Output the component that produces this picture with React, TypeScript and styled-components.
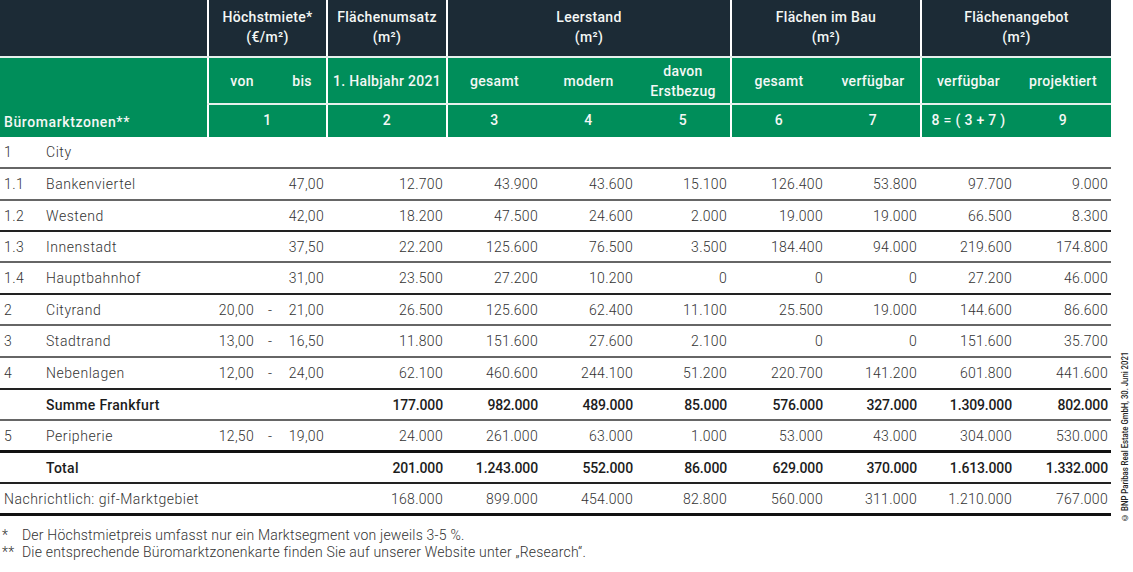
import React from 'react';
import styled, { createGlobalStyle } from 'styled-components';

const GlobalStyle = createGlobalStyle`
  html, body {
    margin: 0;
    padding: 0;
    background: #fff;
  }
`;

const Page = styled.div`
  display: flex;
  width: 1133px;
  height: 572px;
  overflow: hidden;
  font-family: Roboto, "Liberation Sans", sans-serif;
  color: #333;
`;

const Main = styled.div`
  width: 1111px;
  flex: none;
`;

const Table = styled.table`
  width: 1111px;
  table-layout: fixed;
  border-collapse: separate;
  border-spacing: 0;
  font-size: 14px;
  letter-spacing: 0.3px;
`;

const HeadCell = styled.th<{ $tone: 'dark' | 'green'; $height?: number; $first?: boolean; $shift?: number }>`
  height: ${({ $height }) => $height ?? 45}px;
  box-sizing: border-box;
  padding: 0 0 0 ${({ $shift }) => $shift ?? 0}px;
  background: ${({ $tone }) => ($tone === 'dark' ? '#1c2b36' : '#008e5a')};
  color: #f4f7f5;
  font-weight: 500;
  line-height: 20px;
  text-align: center;
  vertical-align: middle;
  border-left: ${({ $first }) => ($first ? '2px solid #fff' : '0')};
`;

const TitleCell = styled(HeadCell)`
  padding-bottom: 2px;
`;

const NumberCell = styled(HeadCell)`
  padding-bottom: 2px;
`;

const ZoneCell = styled(HeadCell)`
  padding: 0 0 5px 4px;
  text-align: left;
  vertical-align: bottom;
  letter-spacing: 0.6px;
`;

const DividerLine = styled.td<{ $color: string }>`
  height: 2px;
  padding: 0;
  background: ${({ $color }) => $color};
  font-size: 0;
  line-height: 0;
`;

const Row = styled.tr<{ $height: number }>`
  height: ${({ $height }) => $height}px;
`;

const RULES = {
  light: '2px solid #666',
  dark: '2px solid #222',
  thick: '3px solid #111',
};

type Rule = keyof typeof RULES;

const Cell = styled.td<{ $rule: Rule; $strong?: boolean }>`
  box-sizing: border-box;
  padding: 0 3px 0 0;
  border-bottom: ${({ $rule }) => RULES[$rule]};
  font-weight: ${({ $strong }) => ($strong ? 500 : 300)};
  letter-spacing: ${({ $strong }) => ($strong ? '-0.15px' : '0.3px')};
  color: ${({ $strong }) => ($strong ? '#1c1c1c' : '#333')};
  text-align: right;
  white-space: nowrap;
`;

const CodeCell = styled(Cell)`
  padding-left: 4px;
  text-align: left;
  letter-spacing: 0.5px;
`;

const NameCell = styled(Cell)`
  text-align: left;
  letter-spacing: ${({ $strong }) => ($strong ? '0.3px' : '0.55px')};
`;

const FromCell = styled(Cell)`
  padding-right: 13px;
`;

const ToCell = styled(Cell)`
  padding-right: 2px;
`;

const RangeTo = styled.div`
  display: flex;
  justify-content: space-between;
  padding-left: 1px;
`;

const Notes = styled.div`
  margin-top: 11px;
  font-size: 14px;
  line-height: 17px;
  font-weight: 300;
  letter-spacing: 0.2px;
`;

const Note = styled.div`
  display: flex;
`;

const NoteMark = styled.span`
  width: 22px;
  padding-left: 2px;
  box-sizing: border-box;
  flex: none;
`;

const Credit = styled.div`
  margin: 338px 0 0 9px;
  align-self: flex-start;
  writing-mode: vertical-rl;
  transform: rotate(180deg) scaleY(0.86);
  font-size: 9px;
  line-height: 10px;
  white-space: nowrap;
  color: #222;
  font-weight: 500;
`;

interface DataRow {
  code: string;
  name: string;
  from?: string;
  to?: string;
  values: string[];
  rule: Rule;
  height: number;
  strong?: boolean;
}

const widths = [46, 161, 60, 60, 119, 95, 95, 94, 96, 94, 95, 96];

const rows: DataRow[] = [
  { code: '1', name: 'City', values: ['', '', '', '', '', '', '', ''], rule: 'light', height: 32 },
  { code: '1.1', name: 'Bankenviertel', to: '47,00', values: ['12.700', '43.900', '43.600', '15.100', '126.400', '53.800', '97.700', '9.000'], rule: 'light', height: 32 },
  { code: '1.2', name: 'Westend', to: '42,00', values: ['18.200', '47.500', '24.600', '2.000', '19.000', '19.000', '66.500', '8.300'], rule: 'dark', height: 31 },
  { code: '1.3', name: 'Innenstadt', to: '37,50', values: ['22.200', '125.600', '76.500', '3.500', '184.400', '94.000', '219.600', '174.800'], rule: 'light', height: 31 },
  { code: '1.4', name: 'Hauptbahnhof', to: '31,00', values: ['23.500', '27.200', '10.200', '0', '0', '0', '27.200', '46.000'], rule: 'dark', height: 32 },
  { code: '2', name: 'Cityrand', from: '20,00', to: '21,00', values: ['26.500', '125.600', '62.400', '11.100', '25.500', '19.000', '144.600', '86.600'], rule: 'light', height: 31 },
  { code: '3', name: 'Stadtrand', from: '13,00', to: '16,50', values: ['11.800', '151.600', '27.600', '2.100', '0', '0', '151.600', '35.700'], rule: 'light', height: 32 },
  { code: '4', name: 'Nebenlagen', from: '12,00', to: '24,00', values: ['62.100', '460.600', '244.100', '51.200', '220.700', '141.200', '601.800', '441.600'], rule: 'dark', height: 32 },
  { code: '', name: 'Summe Frankfurt', values: ['177.000', '982.000', '489.000', '85.000', '576.000', '327.000', '1.309.000', '802.000'], rule: 'light', height: 31, strong: true },
  { code: '5', name: 'Peripherie', from: '12,50', to: '19,00', values: ['24.000', '261.000', '63.000', '1.000', '53.000', '43.000', '304.000', '530.000'], rule: 'thick', height: 32 },
  { code: '', name: 'Total', values: ['201.000', '1.243.000', '552.000', '86.000', '629.000', '370.000', '1.613.000', '1.332.000'], rule: 'dark', height: 31, strong: true },
];

const memo = ['168.000', '899.000', '454.000', '82.800', '560.000', '311.000', '1.210.000', '767.000'];

const App: React.FC = () => {
  return (
    <Page>
      <GlobalStyle />
      <Main>
        <Table>
          <colgroup>
            <col style={{ width: widths[0] }} />
            <col style={{ width: widths[1] }} />
            <col style={{ width: widths[2] }} />
            <col style={{ width: widths[3] - 1 }} />
            <col style={{ width: widths[4] + 1 }} />
            {widths.slice(5).map((w, i) => (
              <col key={i} style={{ width: w }} />
            ))}
          </colgroup>
          <thead>
            <tr>
              <TitleCell $tone="dark" $height={56} colSpan={2} />
              <TitleCell $tone="dark" $height={56} $first colSpan={2}>Höchstmiete*<br />(€/m²)</TitleCell>
              <TitleCell $tone="dark" $height={56} $first>Flächenumsatz<br />(m²)</TitleCell>
              <TitleCell $tone="dark" $height={56} $first colSpan={3}>Leerstand<br />(m²)</TitleCell>
              <TitleCell $tone="dark" $height={56} $first colSpan={2}>Flächen im Bau<br />(m²)</TitleCell>
              <TitleCell $tone="dark" $height={56} $first colSpan={2}>Flächenangebot<br />(m²)</TitleCell>
            </tr>
          </thead>
          <tbody>
            <tr>
              <DividerLine $color="#e6f0ec" colSpan={12} />
            </tr>
            <tr>
              <ZoneCell $tone="green" colSpan={2} rowSpan={3}>Büromarktzonen**</ZoneCell>
              <HeadCell $tone="green" $first $shift={8}>von</HeadCell>
              <HeadCell $tone="green" $shift={11}>bis</HeadCell>
              <HeadCell $tone="green" $first>1. Halbjahr 2021</HeadCell>
              <HeadCell $tone="green" $first>gesamt</HeadCell>
              <HeadCell $tone="green">modern</HeadCell>
              <HeadCell $tone="green">davon<br />Erstbezug</HeadCell>
              <HeadCell $tone="green" $first>gesamt</HeadCell>
              <HeadCell $tone="green">verfügbar</HeadCell>
              <HeadCell $tone="green" $first>verfügbar</HeadCell>
              <HeadCell $tone="green">projektiert</HeadCell>
            </tr>
            <tr>
              <DividerLine $color="#e6f0ec" colSpan={10} />
            </tr>
            <tr>
              <NumberCell $tone="green" $height={32} $first colSpan={2}>1</NumberCell>
              <NumberCell $tone="green" $height={32} $first>2</NumberCell>
              <NumberCell $tone="green" $height={32} $first>3</NumberCell>
              <NumberCell $tone="green" $height={32}>4</NumberCell>
              <NumberCell $tone="green" $height={32}>5</NumberCell>
              <NumberCell $tone="green" $height={32} $first>6</NumberCell>
              <NumberCell $tone="green" $height={32}>7</NumberCell>
              <NumberCell $tone="green" $height={32} $first>8 = ( 3 + 7 )</NumberCell>
              <NumberCell $tone="green" $height={32}>9</NumberCell>
            </tr>
            {rows.map((r) => (
              <Row key={r.code + r.name} $height={r.height}>
                <CodeCell $rule={r.rule}>{r.code}</CodeCell>
                <NameCell $rule={r.rule} $strong={r.strong}>{r.name}</NameCell>
                <FromCell $rule={r.rule}>{r.from}</FromCell>
                <ToCell $rule={r.rule}>
                  {r.from ? (
                    <RangeTo>
                      <span>-</span>
                      <span>{r.to}</span>
                    </RangeTo>
                  ) : (
                    r.to
                  )}
                </ToCell>
                {r.values.map((v, i) => (
                  <Cell key={i} $rule={r.rule} $strong={r.strong}>{v}</Cell>
                ))}
              </Row>
            ))}
            <Row $height={32}>
              <CodeCell $rule="thick" colSpan={4}>Nachrichtlich: gif-Marktgebiet</CodeCell>
              {memo.map((v, i) => (
                <Cell key={i} $rule="thick">{v}</Cell>
              ))}
            </Row>
          </tbody>
        </Table>
        <Notes>
          <Note><NoteMark>*</NoteMark>Der Höchstmietpreis umfasst nur ein Marktsegment von jeweils 3-5 %.</Note>
          <Note><NoteMark>**</NoteMark>Die entsprechende Büromarktzonenkarte finden Sie auf unserer Website unter „Research“.</Note>
        </Notes>
      </Main>
      <Credit>© BNP Paribas Real Estate GmbH, 30. Juni 2021</Credit>
    </Page>
  );
};

export default App;
